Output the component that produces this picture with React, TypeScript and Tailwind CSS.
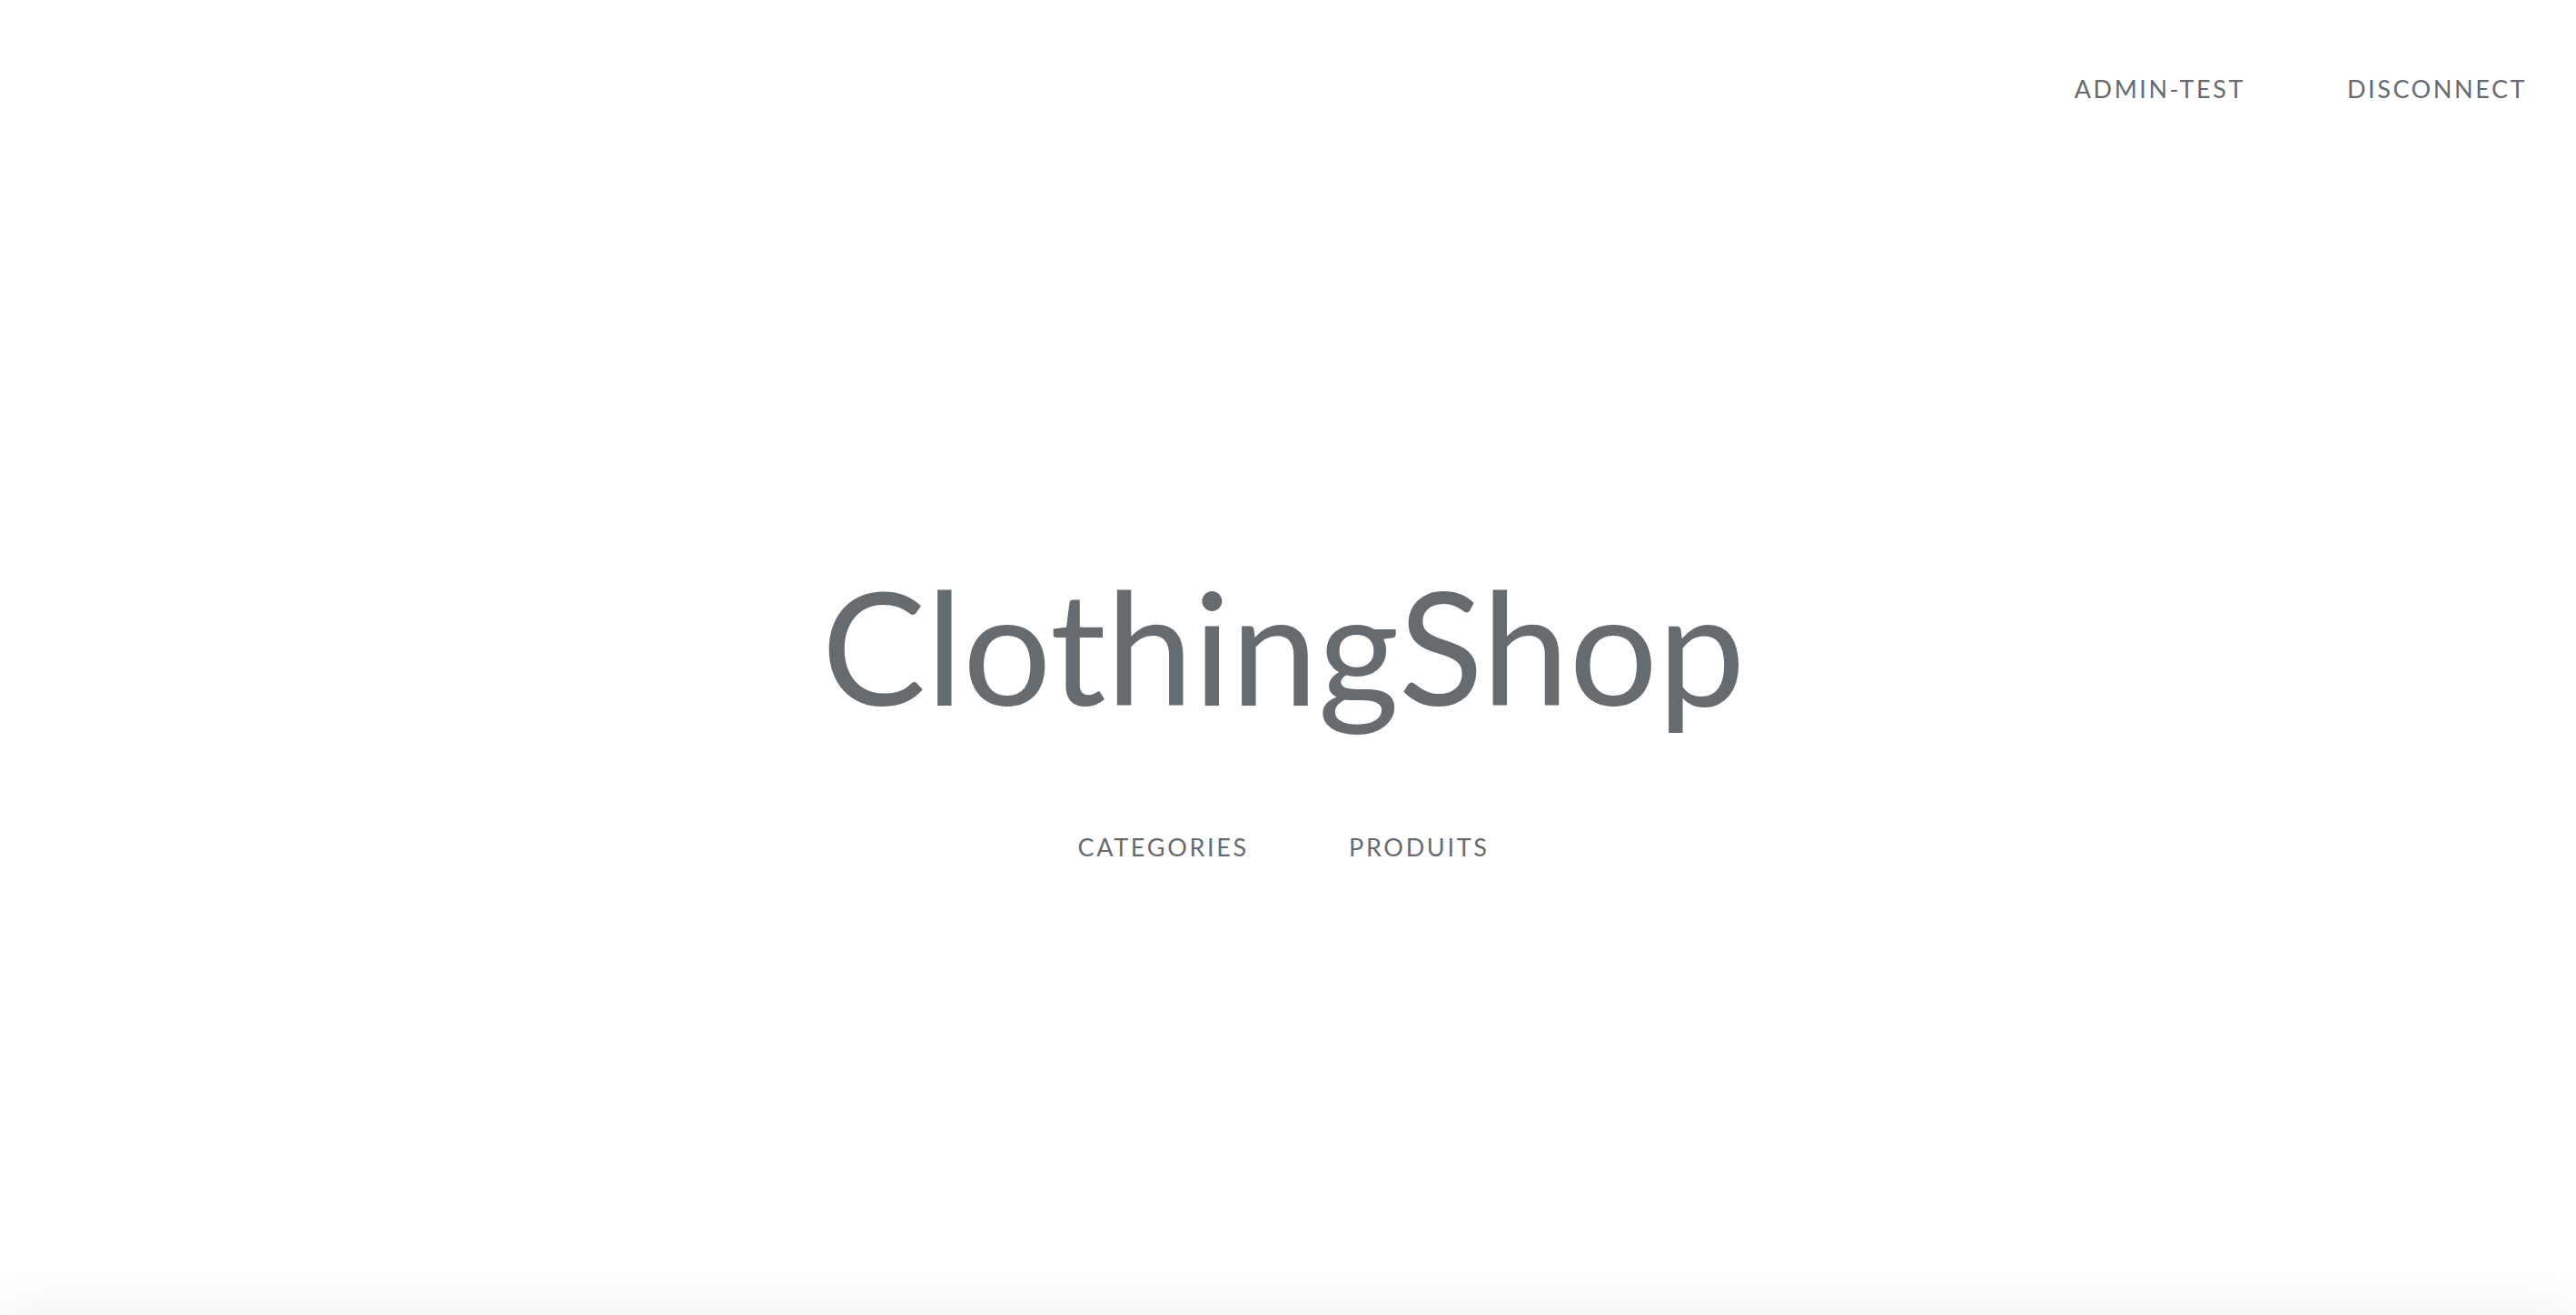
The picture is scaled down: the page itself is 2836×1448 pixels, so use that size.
export default function App() {
  return (
    <div className="min-h-screen bg-white text-[#666b6f]" style={{ fontFamily: "Lato, 'Open Sans', sans-serif" }}>
      {/* HEADER */}
      <header className="flex h-[196px] items-center justify-end gap-[112px] pr-[54px]">
        <a className="text-[27px] uppercase leading-[42px] tracking-[0.095em]">admin-test</a>
        <a className="text-[27px] uppercase leading-[42px] tracking-[0.095em]">Disconnect</a>
      </header>

      {/* HERO */}
      <section className="flex h-[1252px] flex-col items-center pr-[10px] pt-[429px]">
        <h1 className="text-[172px] font-normal leading-none">ClothingShop</h1>
        <nav className="mt-[115px] flex gap-[110px]">
          <a className="text-[27px] uppercase leading-[42px] tracking-[0.1em]">Categories</a>
          <a className="text-[27px] uppercase leading-[42px] tracking-[0.1em]">Produits</a>
        </nav>
      </section>

      {/* NEXT SECTION */}
      <section className="relative h-[600px] bg-white shadow-[0_0_60px_rgba(0,0,0,0.07)]" />
    </div>
  );
}
